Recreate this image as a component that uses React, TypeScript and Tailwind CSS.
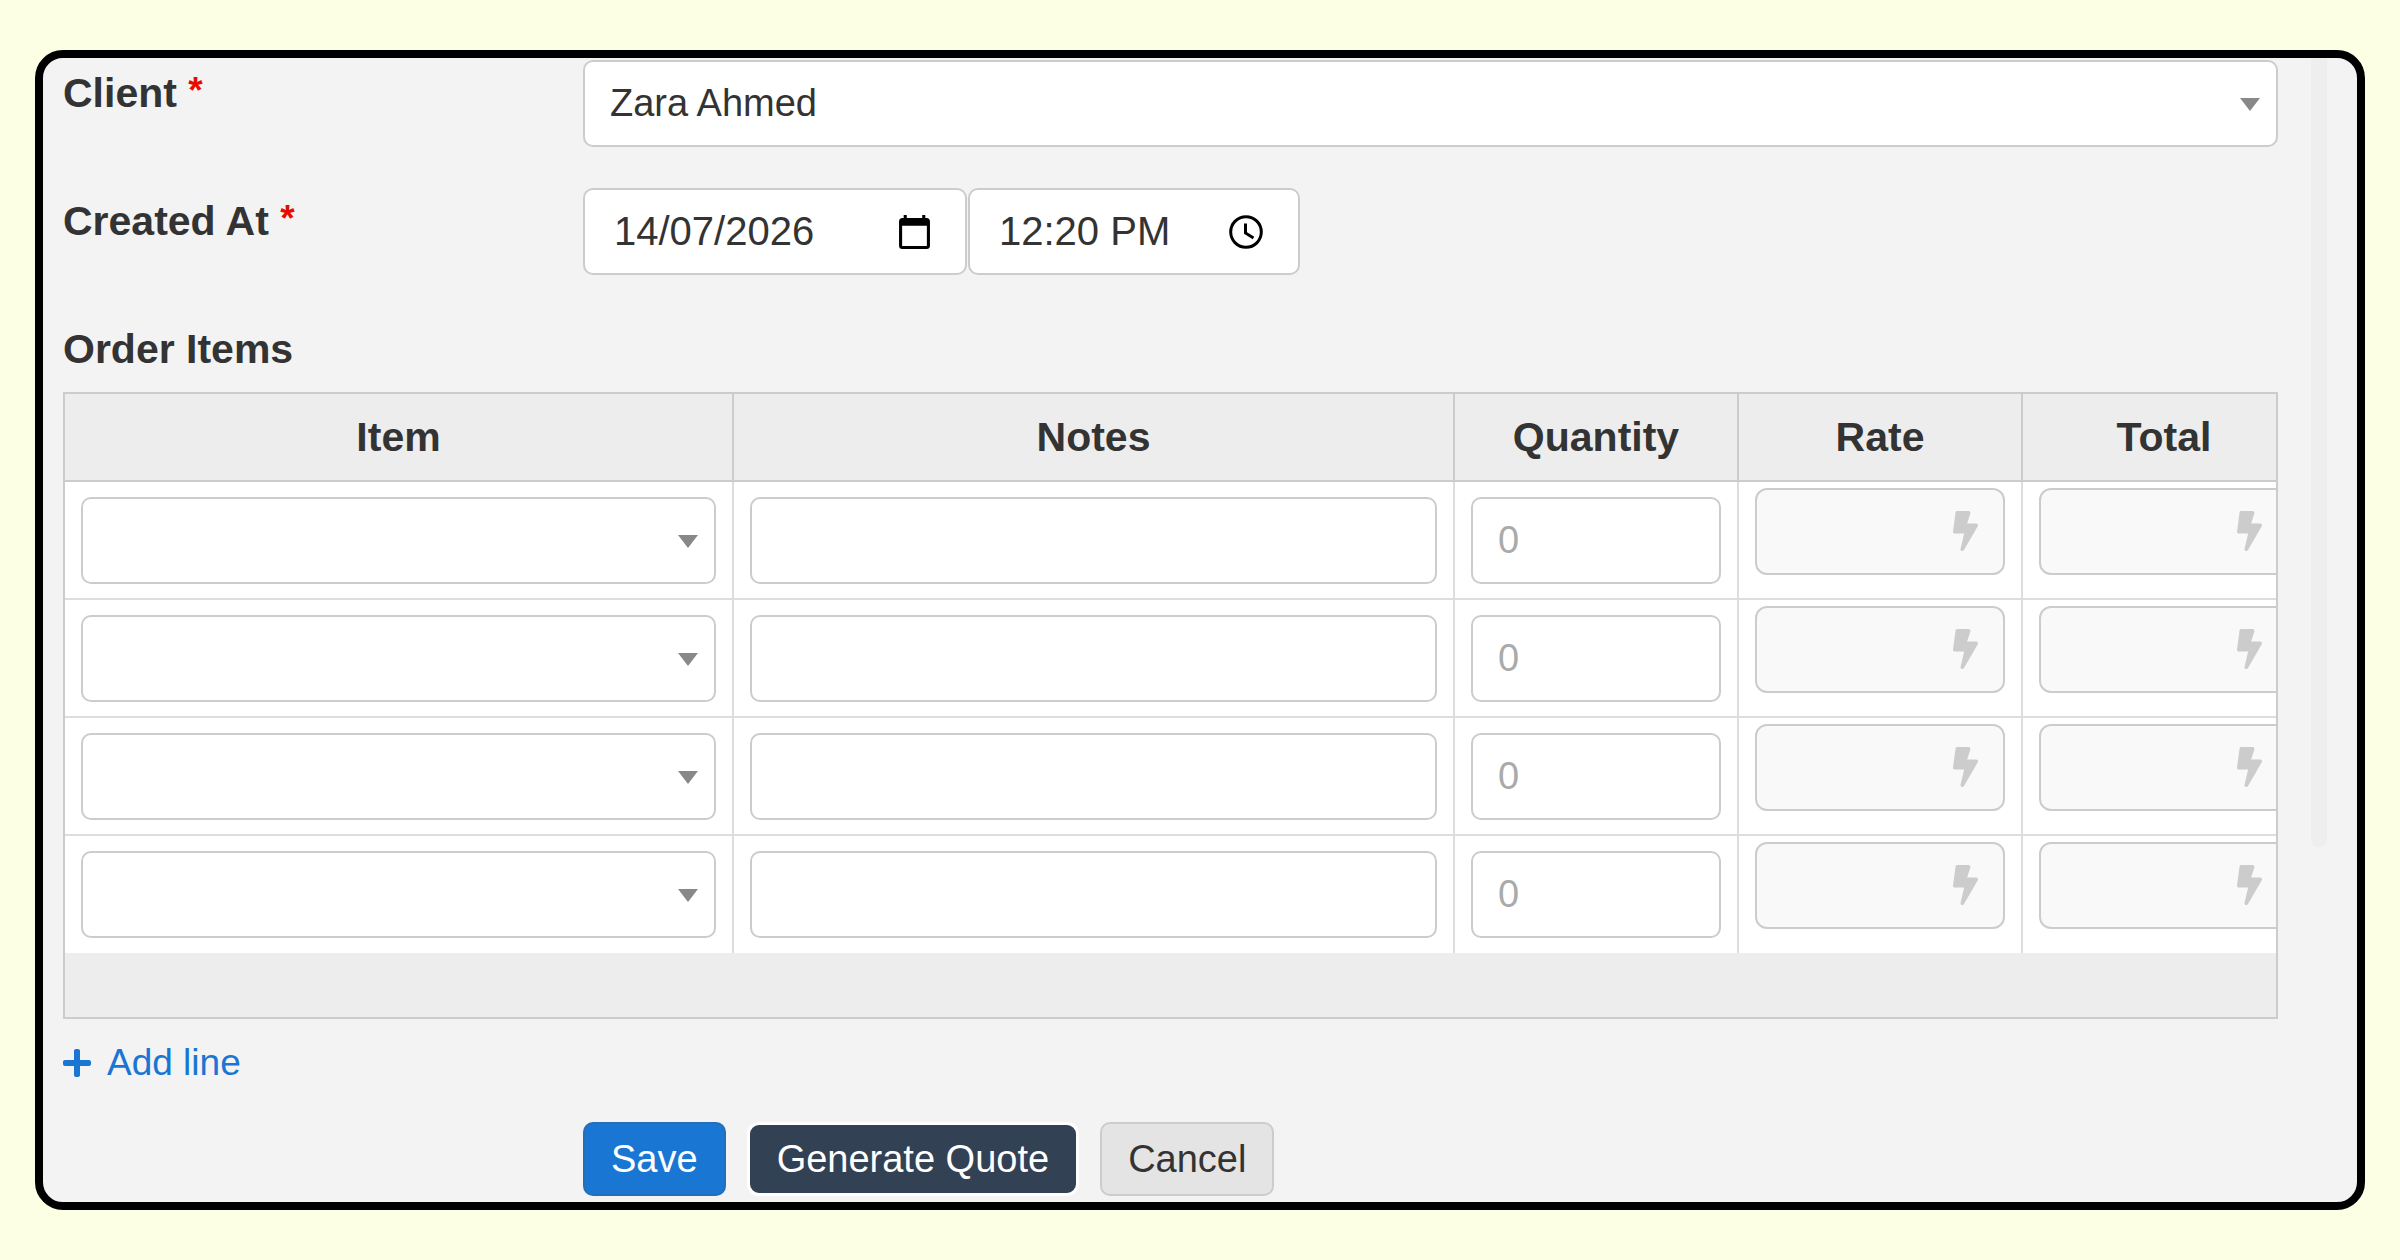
import type { ReactNode, SVGProps } from "react";
import { useState } from "react";
import { FaBolt, FaPlus } from "react-icons/fa";

const fieldClass =
  "h-[87px] w-full rounded-[10px] border-2 border-[#cccccc] bg-white px-[25px] text-[38px] text-[#333333] placeholder:text-[#aaaaaa] outline-none focus:border-[#1976d2]";

const clients = ["Zara Ahmed"];

export default function App() {
  const [lines, setLines] = useState([1, 2, 3, 4]);

  return (
    <div className="min-h-screen bg-[#fdffe5] px-[35px] py-[50px] font-['Liberation_Sans',Arial,sans-serif] text-[#333333]">
      <main className="flex overflow-hidden rounded-[28px] border-8 border-black bg-[#f3f3f3]">
        <form
          className="min-w-0 flex-1 pt-0.5 pb-1.5 pl-5"
          onSubmit={(e) => e.preventDefault()}
        >
          <FormRow label="Client" htmlFor="client">
            <SelectField id="client" options={clients} />
          </FormRow>

          <FormRow label="Created At" htmlFor="created-date">
            <div className="flex gap-px">
              <PickerField
                id="created-date"
                label="Created date"
                value="14/07/2026"
                width="w-[384px]"
                icon={<CalendarIcon />}
              />
              <PickerField
                id="created-time"
                label="Created time"
                value="12:20 PM"
                width="w-[332px]"
                icon={<ClockIcon />}
              />
            </div>
          </FormRow>

          <h2 className="pt-[9px] text-[41px] leading-[48px] font-bold">Order Items</h2>
          <OrderTable lines={lines} />

          <button
            type="button"
            onClick={() => setLines((prev) => [...prev, prev.length + 1])}
            className="mt-[22px] flex items-center gap-4 text-[37px] leading-[44px] text-[#1976d2]"
          >
            <FaPlus className="h-8 w-7" aria-hidden />
            Add line
          </button>

          <div className="mt-[37px] flex gap-[21px] pl-[520px] text-[38px] leading-none">
            <button
              type="submit"
              className="h-[74px] rounded-[10px] border-2 border-[#256fb8] bg-[#1976d2] px-[26px] text-white"
            >
              Save
            </button>
            <button
              type="button"
              className="h-[74px] rounded-[12px] border-3 border-white bg-[#324154] px-[27px] text-white"
            >
              Generate Quote
            </button>
            <button
              type="button"
              className="h-[74px] rounded-[10px] border-2 border-[#cccccc] bg-[#e4e4e4] px-[26px]"
            >
              Cancel
            </button>
          </div>
        </form>

        <div className="mr-[30px] ml-[33px] h-[789px] w-4 shrink-0 rounded-b-lg bg-[#eeeeee]" aria-hidden />
      </main>
    </div>
  );
}

function FormRow({
  label,
  htmlFor,
  children,
}: {
  label: string;
  htmlFor: string;
  children: ReactNode;
}) {
  return (
    <div className="mb-[41px] flex">
      <label
        htmlFor={htmlFor}
        className="w-[520px] shrink-0 pt-[9px] text-[41px] leading-[48px] font-bold"
      >
        {label} <span className="align-top text-[37px] leading-[44px] text-[#e60c00]">*</span>
      </label>
      <div className="min-w-0 flex-1">{children}</div>
    </div>
  );
}

function SelectField({
  id,
  label,
  options,
}: {
  id: string;
  label?: string;
  options: string[];
}) {
  return (
    <div className="relative">
      <select id={id} aria-label={label} className={`${fieldClass} appearance-none`}>
        {options.map((option) => (
          <option key={option}>{option}</option>
        ))}
      </select>
      <svg
        viewBox="0 0 20 13"
        className="pointer-events-none absolute top-[38px] right-[18px] h-[13px] w-5 fill-[#888888]"
        aria-hidden
      >
        <path d="M0 0h20L10 13z" />
      </svg>
    </div>
  );
}

function PickerField({
  id,
  label,
  value,
  width,
  icon,
}: {
  id: string;
  label: string;
  value: string;
  width: string;
  icon: ReactNode;
}) {
  return (
    <div className={`relative ${width}`}>
      <input
        id={id}
        type="text"
        aria-label={label}
        defaultValue={value}
        className="h-[87px] w-full rounded-[10px] border-2 border-[#cccccc] bg-white px-[29px] text-[40px] text-[#333333] outline-none focus:border-[#1976d2]"
      />
      <span className="pointer-events-none absolute inset-y-0 right-[37px] flex items-center">{icon}</span>
    </div>
  );
}

function OrderTable({ lines }: { lines: number[] }) {
  return (
    <div className="mt-[19px] overflow-hidden border-2 border-[#cccccc] bg-white">
      <table className="w-[calc(100%+31px)] table-fixed border-separate border-spacing-0">
        <colgroup>
          <col className="w-[669px]" />
          <col />
          <col className="w-[284px]" />
          <col className="w-[284px]" />
          <col className="w-[284px]" />
        </colgroup>
        <thead>
          <tr className="h-[88px] bg-[#ededed]">
            {["Item", "Notes", "Quantity", "Rate", "Total"].map((title) => (
              <th
                key={title}
                scope="col"
                className="border-r-2 border-b-2 border-[#cccccc] text-[41px] leading-[48px] font-bold"
              >
                {title}
              </th>
            ))}
          </tr>
        </thead>
        <tbody className="[&>tr:last-child>td]:border-b-0 [&>tr:last-child>td]:pb-[15px]">
          {lines.map((line) => (
            <tr key={line}>
              <Cell>
                <SelectField id={`item-${line}`} label={`Item ${line}`} options={[""]} />
              </Cell>
              <Cell>
                <input type="text" aria-label={`Notes ${line}`} className={`${fieldClass} block`} />
              </Cell>
              <Cell>
                <input
                  type="text"
                  inputMode="numeric"
                  placeholder="0"
                  aria-label={`Quantity ${line}`}
                  className={`${fieldClass} block`}
                />
              </Cell>
              <ComputedCell label={`Rate ${line}`} />
              <ComputedCell label={`Total ${line}`} />
            </tr>
          ))}
        </tbody>
      </table>
      <div className="h-16 bg-[#ededed]" />
    </div>
  );
}

function Cell({ children }: { children: ReactNode }) {
  return (
    <td className="border-r-2 border-b-2 border-[#dddddd] px-4 pt-[15px] pb-3.5 align-top">
      {children}
    </td>
  );
}

function ComputedCell({ label }: { label: string }) {
  return (
    <td className="border-r-2 border-b-2 border-[#dddddd] px-4 pt-1.5 align-top">
      <div className="relative">
        <input
          type="text"
          readOnly
          aria-label={label}
          className="block h-[87px] w-full rounded-[12px] border-2 border-[#cccccc] bg-[#f9f9f9] px-[26px] text-[38px] outline-none"
        />
        <FaBolt
          className="pointer-events-none absolute top-[23px] right-[27px] h-10 w-[25px] text-[#cccccc]"
          aria-hidden
        />
      </div>
    </td>
  );
}

function CalendarIcon(props: SVGProps<SVGSVGElement>) {
  return (
    <svg viewBox="2 1 20 22" className="h-[34px] w-[31px] fill-black" aria-hidden {...props}>
      <path d="M20 3h-1V1h-2v2H7V1H5v2H4c-1.1 0-2 .9-2 2v16c0 1.1.9 2 2 2h16c1.1 0 2-.9 2-2V5c0-1.1-.9-2-2-2zm0 18H4V8h16v13z" />
    </svg>
  );
}

function ClockIcon(props: SVGProps<SVGSVGElement>) {
  return (
    <svg
      viewBox="0 0 34 34"
      className="h-[34px] w-[34px] fill-none stroke-black stroke-3"
      aria-hidden
      {...props}
    >
      <circle cx="17" cy="17" r="15.3" />
      <path d="M16.5 8.5v9.5l8 5" />
    </svg>
  );
}
